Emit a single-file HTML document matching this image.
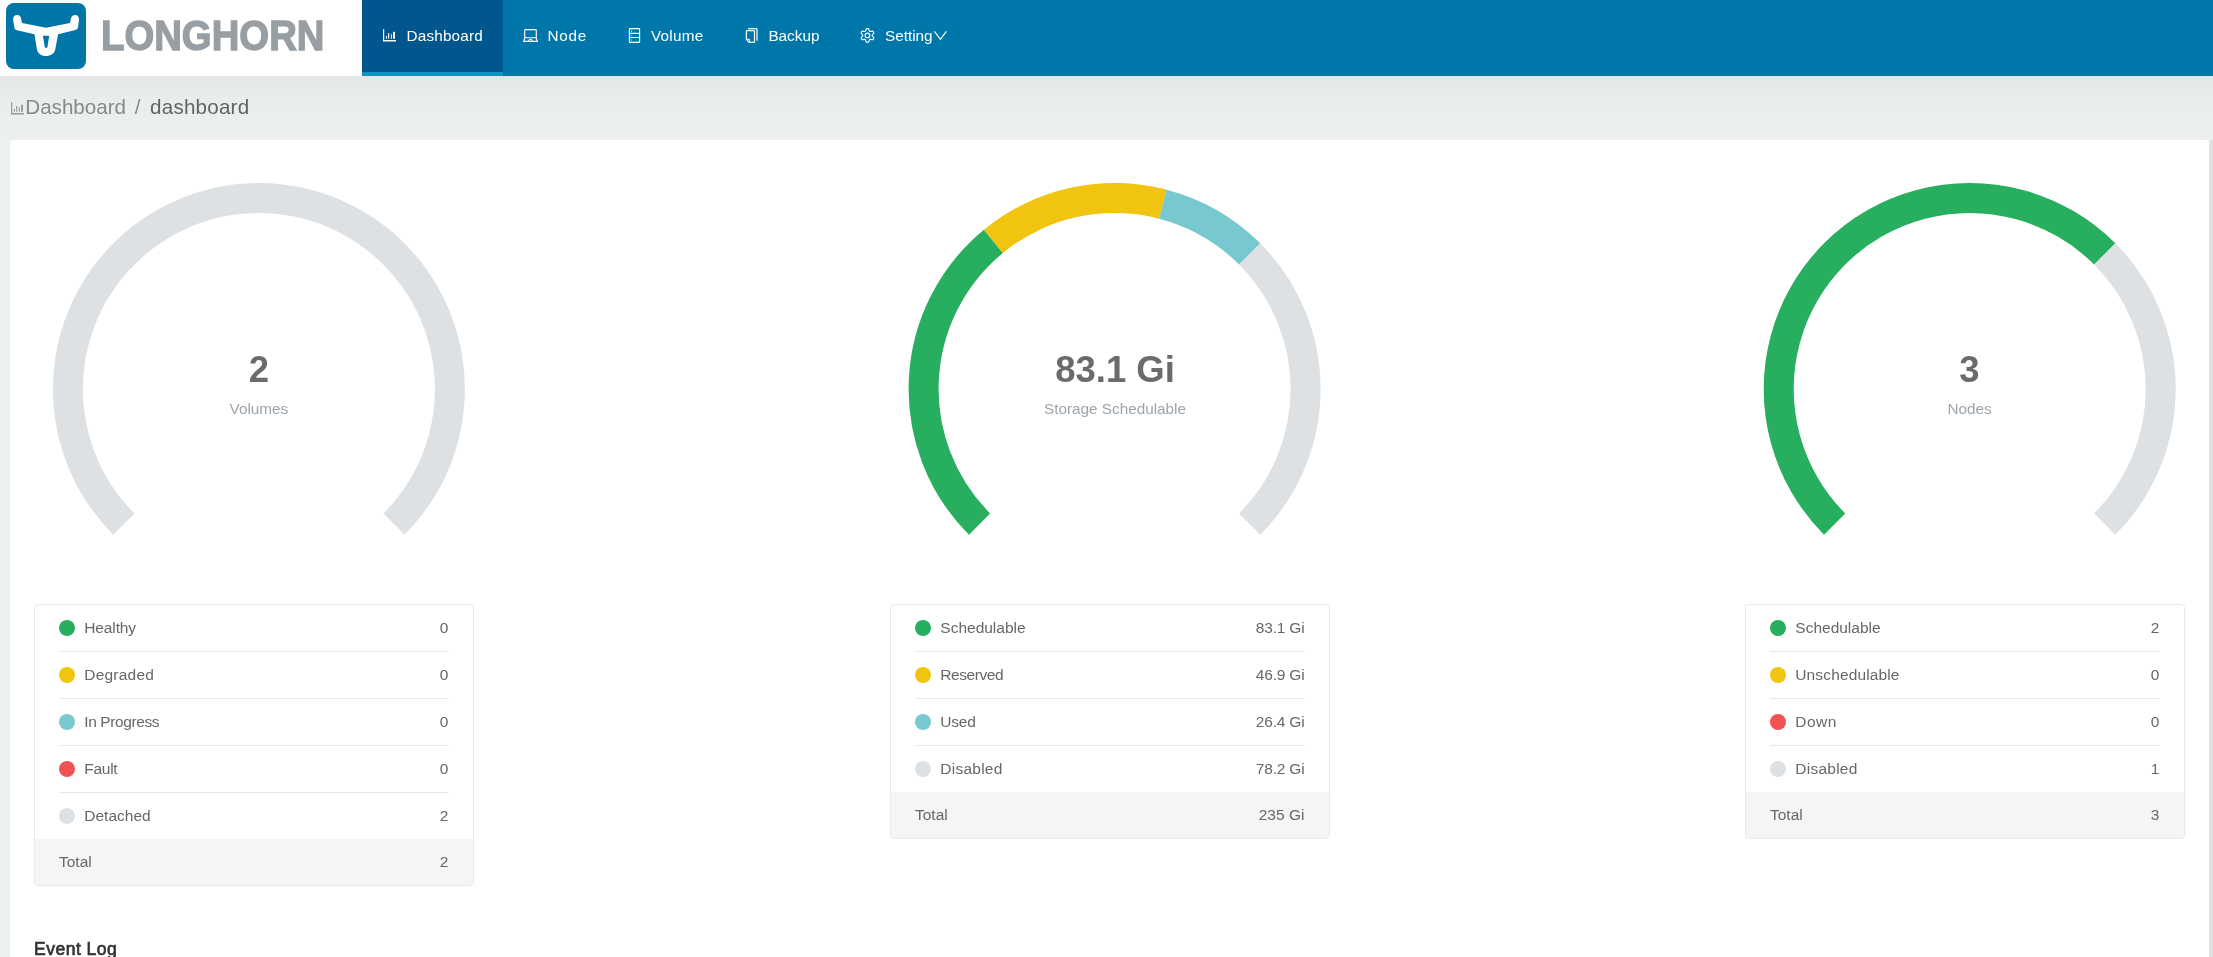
<!DOCTYPE html>
<html>
<head>
<meta charset="utf-8">
<title>Longhorn</title>
<style>
*{box-sizing:border-box;margin:0;padding:0}
html,body{width:2213px;height:957px;overflow:hidden}
body{font-family:"Liberation Sans",sans-serif;font-size:15.3px;color:#666;background:#ecf0f1;position:relative;will-change:transform}
.abs{position:absolute}
#bg{left:0;top:76px;width:2213px;height:881px;background:linear-gradient(#e3e7e8 0,#e8eced 18px,#ecf0f1 55px)}
#header{left:0;top:0;width:2213px;height:76px;background:#0077ab}
#logo{left:0;top:0;width:362px;height:76px;background:#fff}
#logobox{left:6px;top:3px;width:80px;height:65.5px;border-radius:8px;background:#0075a8}
#logotext{left:100.6px;top:-2.6px;height:76px;font-weight:bold;font-size:43.4px;line-height:43.4px;color:#979fa4;-webkit-text-stroke:1.4px #979fa4;transform-origin:0 0;transform:scaleX(.883);white-space:nowrap}
.nav{top:0;height:76px;color:#fff;font-size:15.3px}
#nav-active{left:362px;top:0;width:141px;height:76px;background:#00568d;border-bottom:4px solid #1590bf}
.nt{top:26px;line-height:20px;color:#fff;font-size:15.3px;white-space:nowrap}
.ni{top:27px;width:16px;height:16px}
#crumb{left:25.3px;top:94px;font-size:20.6px;line-height:26px;color:#898989;white-space:nowrap}
#crumb b{font-weight:normal;color:#636363}
#panel{left:10px;top:140px;width:2199px;height:830px;background:#fff;border-radius:2px}
#scroll{left:2209px;top:140px;width:4px;height:817px;background:#e0e0e0;border-top-left-radius:3px}
.gauge{top:173px;width:432px;height:380px}
.gnum{width:400px;text-align:center;font-weight:bold;font-size:36.5px;line-height:40px;color:#6b6b6b;top:350px}
.glab{width:400px;text-align:center;font-size:15.3px;line-height:20px;color:#9ba5ab;top:398.6px}
.card{top:604px;width:440px;border:1px solid #e8ebec;border-radius:4px;background:#fff;overflow:hidden}
.row{height:47px;margin:0 24px;border-bottom:1px solid #e8e9ed;position:relative;line-height:46px;color:#676767;font-size:15.5px}
.row.last{border-bottom:none;height:46px}
.row i{position:absolute;left:0;top:15px;width:16px;height:16px;border-radius:50%}
.row span{position:absolute;left:25.3px;top:0;white-space:nowrap}
.row em{position:absolute;right:.6px;top:0;font-style:normal;white-space:nowrap}
.total{height:46px;padding:0 24px;background:#f4f6f6;position:relative;line-height:45.4px;color:#676767;font-size:15.5px}
.total em{position:absolute;right:24.6px;top:0;font-style:normal}
.c1{background:#27ae5f}.c2{background:#f1c40f}.c3{background:#78c9cf}.c4{background:#f15354}.c5{background:#dee1e3}
#evt{left:34px;top:938px;transform:translateY(-.45px);font-weight:normal;font-size:17.5px;letter-spacing:.5px;-webkit-text-stroke:.7px #333;line-height:22px;color:#333;white-space:nowrap}
</style>
</head>
<body>
<div id="bg" class="abs"></div>
<div id="header" class="abs"></div>
<div id="logo" class="abs"></div>
<div id="logobox" class="abs"></div>
<svg class="abs" style="left:0;top:0" width="100" height="76" viewBox="0 0 100 76">
<path fill="#fff" d="M17.1 15.1 C19.6 15.1 21 16.8 21.1 18.8 L21.9 23 L46.1 27.8 L69.9 23 L70.9 18.8 C71.2 16.8 72.8 15.1 75.1 15.1 C77.6 15.1 79.2 17.2 79 19.4 L78.2 26.2 C77.9 28.4 77.3 29.5 75.4 30 L58.1 34.2 L55.3 49.2 C54.4 53.6 50.6 56 45.9 56 C41.2 56 37.7 53.6 36.9 49.2 L34.4 34.2 L17 30.3 C15.2 29.8 14.5 28.6 14.2 26.8 L13.1 19.4 C12.9 17.2 14.6 15.1 17.1 15.1 Z M42.9 35.8 L44.9 47.7 L47.3 47.7 L49.2 35.8 Z"/>
</svg>
<div id="logotext" class="abs"><span style="line-height:76px">LONGHORN</span></div>

<div id="nav-active" class="abs"></div>
<!-- nav icons -->
<svg class="abs" style="left:380px;top:25px" width="20" height="20" viewBox="0 0 20 20" fill="#fff">
<path d="M3 4.2h1.2v10.7h11.8v1.6H3z"/><rect x="5.9" y="11" width="1.1" height="2.8"/><rect x="8.1" y="8" width="1.1" height="5.8"/><rect x="10.9" y="9.3" width="1.0" height="4.5"/><rect x="13.1" y="6.8" width="1.9" height="7"/>
</svg>
<div class="abs nt" style="left:406.5px;letter-spacing:.17px">Dashboard</div>
<div class="abs nt" style="left:547.6px;letter-spacing:.7px">Node</div>
<div class="abs nt" style="left:651px;letter-spacing:.25px">Volume</div>
<div class="abs nt" style="left:768.4px">Backup</div>
<div class="abs nt" style="left:885px">Setting</div>

<!--ICONS-->
<svg class="abs" style="left:0;top:0" width="2213" height="130" viewBox="0 0 2213 130" fill="none" stroke="#fff" stroke-width="1.15" stroke-linejoin="round" stroke-linecap="butt">
<!-- laptop -->
<rect x="524.7" y="29.6" width="11.6" height="8.1" rx="0.8"/>
<path d="M524.9 37.7L523.5 41.4h14l-1.4-3.7"/>
<path d="M528.3 41.4l.7-1.7h3l.7 1.7" stroke-width="1"/>
<!-- volume -->
<rect x="629.4" y="28.6" width="10.2" height="13.7" rx="0.6"/>
<path d="M629.4 33.4h10.2M629.4 37.5h10.2"/>
<path d="M631.6 30.4v1.6M631.6 35.1v.9M631.6 39.3v1.6" stroke-width="0.9" stroke-opacity=".8"/>
<!-- copy -->
<path d="M746.4 31.3c0-.5.3-.7.7-.7h6.7c.4 0 .7.2.7.7v10.5c0 .4-.3.6-.7.6h-4.7l-2.7-3.1z"/>
<path d="M746.6 39.3h2.4c.5 0 .7.2.7.7v2.3" stroke-width="1"/>
<path d="M748 28.6h8.2c.5 0 .8.3.8.8v11.3"/>
<!-- gear -->
<path d="M867.45 28.60L867.57 28.60L867.69 28.60L867.81 28.61L867.93 28.62L868.05 28.63L868.17 28.64L868.28 28.65L868.40 28.67L868.52 28.70L868.61 28.87L868.70 29.04L868.77 29.22L868.85 29.40L868.91 29.58L868.97 29.76L869.03 29.93L869.08 30.10L869.14 30.26L869.18 30.41L869.23 30.55L869.28 30.68L869.33 30.79L869.38 30.90L869.44 30.99L869.49 31.07L869.55 31.14L869.62 31.20L869.68 31.25L869.75 31.29L869.83 31.34L869.90 31.38L869.97 31.42L870.05 31.45L870.13 31.47L870.22 31.49L870.32 31.50L870.43 31.50L870.54 31.49L870.67 31.48L870.80 31.46L870.95 31.43L871.10 31.40L871.26 31.36L871.44 31.32L871.61 31.29L871.80 31.25L871.99 31.22L872.18 31.19L872.38 31.17L872.57 31.16L872.76 31.15L872.85 31.23L872.92 31.33L872.99 31.42L873.06 31.52L873.13 31.62L873.19 31.72L873.26 31.82L873.32 31.92L873.38 32.03L873.44 32.13L873.50 32.23L873.55 32.34L873.61 32.45L873.66 32.56L873.71 32.66L873.76 32.77L873.80 32.88L873.83 33.00L873.73 33.16L873.62 33.33L873.51 33.48L873.39 33.64L873.26 33.78L873.14 33.93L873.02 34.06L872.90 34.19L872.79 34.32L872.68 34.43L872.58 34.54L872.50 34.65L872.42 34.75L872.36 34.85L872.31 34.94L872.27 35.03L872.24 35.12L872.22 35.20L872.21 35.28L872.20 35.37L872.20 35.45L872.20 35.53L872.21 35.62L872.22 35.70L872.24 35.78L872.27 35.87L872.31 35.96L872.36 36.05L872.42 36.15L872.50 36.25L872.58 36.36L872.68 36.47L872.79 36.58L872.90 36.71L873.02 36.84L873.14 36.97L873.26 37.12L873.39 37.26L873.51 37.42L873.62 37.57L873.73 37.74L873.83 37.90L873.80 38.02L873.76 38.13L873.71 38.24L873.66 38.34L873.61 38.45L873.55 38.56L873.50 38.67L873.44 38.77L873.38 38.88L873.32 38.98L873.26 39.08L873.19 39.18L873.13 39.28L873.06 39.38L872.99 39.48L872.92 39.57L872.85 39.67L872.76 39.75L872.57 39.74L872.38 39.73L872.18 39.71L871.99 39.68L871.80 39.65L871.61 39.61L871.44 39.58L871.26 39.54L871.10 39.50L870.95 39.47L870.80 39.44L870.67 39.42L870.54 39.41L870.43 39.40L870.32 39.40L870.22 39.41L870.13 39.43L870.05 39.45L869.97 39.48L869.90 39.52L869.83 39.56L869.75 39.61L869.68 39.65L869.62 39.70L869.55 39.76L869.49 39.83L869.44 39.91L869.38 40.00L869.33 40.11L869.28 40.22L869.23 40.35L869.18 40.49L869.14 40.64L869.08 40.80L869.03 40.97L868.97 41.14L868.91 41.32L868.85 41.50L868.77 41.68L868.70 41.86L868.61 42.03L868.52 42.20L868.40 42.23L868.28 42.25L868.17 42.26L868.05 42.27L867.93 42.28L867.81 42.29L867.69 42.30L867.57 42.30L867.45 42.30L867.33 42.30L867.21 42.30L867.09 42.29L866.97 42.28L866.85 42.27L866.73 42.26L866.62 42.25L866.50 42.23L866.38 42.20L866.29 42.03L866.20 41.86L866.13 41.68L866.05 41.50L865.99 41.32L865.93 41.14L865.87 40.97L865.82 40.80L865.76 40.64L865.72 40.49L865.67 40.35L865.62 40.22L865.57 40.11L865.52 40.00L865.46 39.91L865.41 39.83L865.35 39.76L865.28 39.70L865.22 39.65L865.15 39.61L865.08 39.56L865.00 39.52L864.93 39.48L864.85 39.45L864.77 39.43L864.68 39.41L864.58 39.40L864.47 39.40L864.36 39.41L864.23 39.42L864.10 39.44L863.95 39.47L863.80 39.50L863.64 39.54L863.46 39.58L863.29 39.61L863.10 39.65L862.91 39.68L862.72 39.71L862.52 39.73L862.33 39.74L862.14 39.75L862.05 39.67L861.98 39.57L861.91 39.48L861.84 39.38L861.77 39.28L861.71 39.18L861.64 39.08L861.58 38.98L861.52 38.88L861.46 38.77L861.40 38.67L861.35 38.56L861.29 38.45L861.24 38.34L861.19 38.24L861.14 38.13L861.10 38.02L861.07 37.90L861.17 37.74L861.28 37.57L861.39 37.42L861.51 37.26L861.64 37.12L861.76 36.97L861.88 36.84L862.00 36.71L862.11 36.58L862.22 36.47L862.32 36.36L862.40 36.25L862.48 36.15L862.54 36.05L862.59 35.96L862.63 35.87L862.66 35.78L862.68 35.70L862.69 35.62L862.70 35.53L862.70 35.45L862.70 35.37L862.69 35.28L862.68 35.20L862.66 35.12L862.63 35.03L862.59 34.94L862.54 34.85L862.48 34.75L862.40 34.65L862.32 34.54L862.22 34.43L862.11 34.32L862.00 34.19L861.88 34.06L861.76 33.93L861.64 33.78L861.51 33.64L861.39 33.48L861.28 33.33L861.17 33.16L861.07 33.00L861.10 32.88L861.14 32.77L861.19 32.66L861.24 32.56L861.29 32.45L861.35 32.34L861.40 32.23L861.46 32.13L861.52 32.03L861.58 31.92L861.64 31.82L861.71 31.72L861.77 31.62L861.84 31.52L861.91 31.42L861.98 31.33L862.05 31.23L862.14 31.15L862.33 31.16L862.52 31.17L862.72 31.19L862.91 31.22L863.10 31.25L863.29 31.29L863.46 31.32L863.64 31.36L863.80 31.40L863.95 31.43L864.10 31.46L864.23 31.48L864.36 31.49L864.47 31.50L864.58 31.50L864.68 31.49L864.77 31.47L864.85 31.45L864.93 31.42L865.00 31.38L865.08 31.34L865.15 31.29L865.22 31.25L865.28 31.20L865.35 31.14L865.41 31.07L865.46 30.99L865.52 30.90L865.57 30.79L865.62 30.68L865.67 30.55L865.72 30.41L865.76 30.26L865.82 30.10L865.87 29.93L865.93 29.76L865.99 29.58L866.05 29.40L866.13 29.22L866.20 29.04L866.29 28.87L866.38 28.70L866.50 28.67L866.62 28.65L866.73 28.64L866.85 28.63L866.97 28.62L867.09 28.61L867.21 28.60L867.33 28.60Z"/>
<circle cx="867.45" cy="35.45" r="2.3"/>
<!-- chevron -->
<path d="M934.4 31.3l6 8 6-8" stroke-width="1.1" stroke-linejoin="miter"/>
</svg>
<!-- crumb icon -->
<svg class="abs" style="left:7.8px;top:98.2px" width="20" height="20" viewBox="0 0 20 20" fill="#979797">
<path d="M3 4.2h1.2v10.7h11.8v1.6H3z"/><rect x="5.9" y="11" width="1.1" height="2.8"/><rect x="8.1" y="8" width="1.1" height="5.8"/><rect x="10.9" y="9.3" width="1.0" height="4.5"/><rect x="13.1" y="6.8" width="1.9" height="7"/>
</svg>
<!--/ICONS-->
<div id="crumb" class="abs">Dashboard <span style="margin:0 4px 0 3px">/</span> <b style="margin-left:-.2px;letter-spacing:.22px">dashboard</b></div>

<div id="panel" class="abs"></div>
<div id="scroll" class="abs"></div>

<!--GEN-->
<svg class="abs" style="left:0;top:0" width="2213" height="957" viewBox="0 0 2213 957" shape-rendering="geometricPrecision">
<path fill="#dee1e3" d="M113.236 534.664A206 206 0 0 1 55.436 356.775A206 206 0 0 1 165.378 205.453A206 206 0 0 1 352.422 205.453A206 206 0 0 1 462.364 356.775A206 206 0 0 1 404.564 534.664L383.351 513.451A176 176 0 0 0 432.733 361.468A176 176 0 0 0 338.802 232.183A176 176 0 0 0 178.998 232.183A176 176 0 0 0 85.067 361.468A176 176 0 0 0 134.449 513.451Z"/>
<path fill="#27ae5f" d="M968.936 534.664A206 206 0 0 1 908.849 378.866A206 206 0 0 1 983.955 229.727L1002.981 252.922A176 176 0 0 0 938.813 380.342A176 176 0 0 0 990.149 513.451Z"/>
<path fill="#f1c40f" d="M983.955 229.727A206 206 0 0 1 1166.583 189.667L1159.013 218.696A176 176 0 0 0 1002.981 252.922Z"/>
<path fill="#78c9cf" d="M1166.583 189.667A206 206 0 0 1 1260.264 243.336L1239.051 264.549A176 176 0 0 0 1159.013 218.696Z"/>
<path fill="#dee1e3" d="M1260.264 243.336A206 206 0 0 1 1320.600 389.000A206 206 0 0 1 1260.264 534.664L1239.051 513.451A176 176 0 0 0 1290.600 389.000A176 176 0 0 0 1239.051 264.549Z"/>
<path fill="#27ae5f" d="M1824.036 534.664A206 206 0 0 1 1770.719 335.683A206 206 0 0 1 1916.383 190.019A206 206 0 0 1 2115.364 243.336L2094.151 264.549A176 176 0 0 0 1924.148 218.997A176 176 0 0 0 1799.697 343.448A176 176 0 0 0 1845.249 513.451Z"/>
<path fill="#dee1e3" d="M2115.364 243.336A206 206 0 0 1 2175.700 389.000A206 206 0 0 1 2115.364 534.664L2094.151 513.451A176 176 0 0 0 2145.700 389.000A176 176 0 0 0 2094.151 264.549Z"/>
</svg>
<div class="abs card" style="left:34px">
<div class="row"><i class="c1"></i><span style="letter-spacing:-0.13px">Healthy</span><em>0</em></div>
<div class="row"><i class="c2"></i><span style="letter-spacing:0.21px">Degraded</span><em>0</em></div>
<div class="row"><i class="c3"></i><span style="letter-spacing:-0.4px">In Progress</span><em>0</em></div>
<div class="row"><i class="c4"></i><span style="letter-spacing:-0.28px">Fault</span><em>0</em></div>
<div class="row last"><i class="c5"></i><span>Detached</span><em>2</em></div>
<div class="total">Total<em>2</em></div>
</div>
<div class="abs card" style="left:890px">
<div class="row"><i class="c1"></i><span>Schedulable</span><em style="letter-spacing:-.2px">83.1 Gi</em></div>
<div class="row"><i class="c2"></i><span style="letter-spacing:-0.44px">Reserved</span><em style="letter-spacing:-.2px">46.9 Gi</em></div>
<div class="row"><i class="c3"></i><span style="letter-spacing:-0.22px">Used</span><em style="letter-spacing:-.2px">26.4 Gi</em></div>
<div class="row last"><i class="c5"></i><span style="letter-spacing:0.25px">Disabled</span><em style="letter-spacing:-.2px">78.2 Gi</em></div>
<div class="total">Total<em>235 Gi</em></div>
</div>
<div class="abs card" style="left:1745px">
<div class="row"><i class="c1"></i><span>Schedulable</span><em>2</em></div>
<div class="row"><i class="c2"></i><span style="letter-spacing:0.13px">Unschedulable</span><em>0</em></div>
<div class="row"><i class="c4"></i><span style="letter-spacing:0.45px">Down</span><em>0</em></div>
<div class="row last"><i class="c5"></i><span style="letter-spacing:0.25px">Disabled</span><em>1</em></div>
<div class="total">Total<em>3</em></div>
</div>
<div class="abs gnum" style="left:58.9px">2</div>
<div class="abs glab" style="left:58.9px">Volumes</div>
<div class="abs gnum" style="left:915px">83.1 Gi</div>
<div class="abs glab" style="left:915px">Storage Schedulable</div>
<div class="abs gnum" style="left:1769.5px">3</div>
<div class="abs glab" style="left:1769.5px">Nodes</div>
<!--/GEN-->
<div id="evt" class="abs">Event Log</div>
</body>
</html>
